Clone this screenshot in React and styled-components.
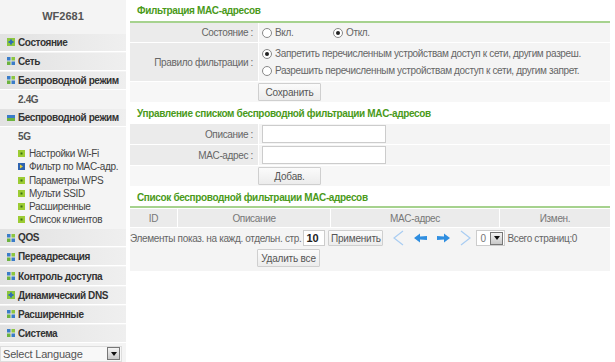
import React from 'react'
import styled, { createGlobalStyle } from 'styled-components'

const Global = createGlobalStyle`
  body {
    margin: 0;
    background: #fff;
    font-family: "Liberation Sans", Arial, sans-serif;
    font-size: 10px;
    letter-spacing: -0.35px;
    color: #666;
  }
`

const Page = styled.div`
  display: flex;
  width: 615px;
  height: 362px;
  overflow: hidden;
`

const Sidebar = styled.div`
  width: 126px;
  flex: none;
  background: #f4f4f4;
  display: flex;
  flex-direction: column;
`

const Brand = styled.div`
  height: 35px;
  padding-top: 10px;
  box-sizing: border-box;
  text-align: center;
  font-weight: bold;
  font-size: 11px;
  letter-spacing: 0;
  color: #555;
`

const MenuItem = styled.div`
  height: 18px;
  margin-bottom: 1px;
  display: flex;
  align-items: center;
  gap: 3px;
  padding-left: 7px;
  color: #333;
  font-weight: bold;
  letter-spacing: -0.4px;
  white-space: nowrap;
  background: linear-gradient(to right, #e2e2e2, #efefef);
  border-bottom: 1px solid #fff;
`

const Band = styled.div`
  height: 18px;
  padding-left: 18px;
  display: flex;
  align-items: center;
  font-weight: bold;
  color: #555;
  margin-bottom: 1px;
`

const SubList = styled.div`
  display: flex;
  flex-direction: column;
  padding: 1px 0 3px 18px;
`

const SubItem = styled.div`
  height: 13.2px;
  display: flex;
  align-items: center;
  gap: 4px;
  color: #444;
  white-space: nowrap;
`

const LangSelect = styled.div`
  margin-top: 2px;
  height: 17px;
  width: 122px;
  box-sizing: border-box;
  background: #f8f8f8;
  border: 1px solid #ddd;
  display: flex;
  align-items: center;
  justify-content: space-between;
  padding-left: 2px;
  color: #555;
  font-size: 11px;
  letter-spacing: -0.2px;
`

const DropBtn = styled.span`
  width: 13px;
  height: 13px;
  margin-right: 1px;
  background: linear-gradient(#f4f4f4, #c8c8c8);
  border: 1px solid #777;
  box-sizing: border-box;
  display: flex;
  align-items: center;
  justify-content: center;
  &::after {
    content: '';
    border-left: 3px solid transparent;
    border-right: 3px solid transparent;
    border-top: 4px solid #111;
  }
`

const Main = styled.div`
  margin-left: 4px;
  width: 480px;
  display: flex;
  flex-direction: column;
`

const Title = styled.div`
  padding: 5px 0 0 7px;
  box-sizing: border-box;
  color: #4a9a1a;
  font-weight: bold;
  border-bottom: 2px solid ${p => (p.line ? '#a6d28e' : 'transparent')};
  height: ${p => p.h || 19}px;
`

const Row = styled.div`
  display: grid;
  grid-template-columns: 129px 1fr;
  border-bottom: 1px solid #fff;
  background: #f4f4f4;
  min-height: ${p => p.h || 19}px;
`

const Label = styled.div`
  background: #ebebeb;
  display: flex;
  align-items: center;
  justify-content: flex-end;
  padding-right: 5px;
  border-right: 1px solid #fff;
`

const Value = styled.div`
  display: flex;
  flex-direction: ${p => (p.column ? 'column' : 'row')};
  justify-content: ${p => (p.column ? 'center' : 'flex-start')};
  align-items: ${p => (p.column ? 'flex-start' : 'center')};
  padding-left: 3px;
  gap: ${p => (p.column ? '6px' : '0')};
  white-space: nowrap;
`

const ButtonRow = styled.div`
  background: #f7f7f7;
  padding: 1px 0 1px 128px;
  border-bottom: 1px solid #fff;
`

const Button = styled.button`
  font-family: inherit;
  font-size: 10px;
  letter-spacing: -0.2px;
  color: #555;
  height: 18px;
  width: ${p => p.w || 63}px;
  padding: 0;
  border: 1px solid #cfcfcf;
  background: linear-gradient(#fbfbfb, #ececec);
  border-radius: 1px;
  white-space: nowrap;
  display: block;
`

const Radio = styled.label`
  display: flex;
  align-items: center;
  gap: 3px;
  width: ${p => (p.w ? p.w + 'px' : 'auto')};
  color: #666;
`

const Dot = styled.span`
  width: 8px;
  height: 8px;
  border-radius: 50%;
  border: 1px solid #888;
  background: #fff;
  display: flex;
  align-items: center;
  justify-content: center;
  &::after {
    content: '';
    width: 4px;
    height: 4px;
    border-radius: 50%;
    background: ${p => (p.on ? '#222' : 'transparent')};
  }
`

const Input = styled.input`
  font-family: inherit;
  font-size: 11px;
  width: ${p => p.w || 124}px;
  height: ${p => p.h || 18}px;
  margin-left: ${p => p.ml || 0}px;
  box-sizing: border-box;
  border: 1px solid #ccc;
  background: #fff;
  padding: 0 2px;
  font-weight: ${p => (p.bold ? 'bold' : 'normal')};
  color: #222;
`

const HeadRow = styled.div`
  display: grid;
  grid-template-columns: 47px 152px 168px 1fr;
  gap: 1px;
  background: #fff;
  border-top: 1px solid #fff;
`

const HeadCell = styled.div`
  height: 18px;
  background: #ebebeb;
  display: flex;
  align-items: center;
  justify-content: center;
  color: #777;
`

const Pager = styled.div`
  background: #f4f4f4;
  height: 20px;
  display: flex;
  align-items: center;
  color: #666;
  white-space: nowrap;
  border-top: 1px solid #fff;
`

const PagerButton = styled(Button)`
  height: 16px;
  margin-left: 3px;
`

const Arrow = styled.svg`
  width: 16px;
  height: 16px;
  flex: none;
  margin-left: ${p => p.ml || 6}px;
`

const PageSelect = styled.div`
  margin-left: 3px;
  width: 29px;
  height: 16px;
  box-sizing: border-box;
  border: 1px solid #ccc;
  background: #fff;
  display: flex;
  align-items: center;
  justify-content: space-between;
  padding-left: 3px;
  color: #777;
  margin-right: 2px;
`

const DeleteRow = styled.div`
  background: #f4f4f4;
  padding: 1px 0 4px 127px;
`

const GridIcon = ({ kind }) => {
  if (kind === 'dot')
    return (
      <svg width="8" height="8" viewBox="0 0 8 8">
        <rect width="8" height="8" fill="#8cc63f" />
        <rect x="3" y="1.5" width="2" height="5" fill="#2f6fb5" />
        <rect x="1.5" y="3" width="5" height="2" fill="#2f6fb5" />
      </svg>
    )
  if (kind === 'open')
    return (
      <svg width="8" height="8" viewBox="0 0 8 8">
        <rect y="1" width="8" height="3" fill="#3a7cc8" />
        <rect y="4" width="8" height="3" fill="#6cb33f" />
      </svg>
    )
  return (
    <svg width="8" height="8" viewBox="0 0 8 8">
      <rect width="3.5" height="3.5" fill="#3a7cc8" />
      <rect x="4.5" width="3.5" height="3.5" fill="#8cc63f" />
      <rect y="4.5" width="3.5" height="3.5" fill="#6cb33f" />
      <rect x="4.5" y="4.5" width="3.5" height="3.5" fill="#3a7cc8" />
    </svg>
  )
}

const Bullet = ({ active }) =>
  active ? (
    <svg width="7" height="7" viewBox="0 0 7 7">
      <rect width="7" height="7" fill="#2f64b0" />
      <path d="M2 1.5 L5 3.5 L2 5.5 Z" fill="#e8d23a" />
    </svg>
  ) : (
    <svg width="7" height="7" viewBox="0 0 7 7">
      <rect width="7" height="7" fill="#9ccc33" />
      <rect x="2.5" y="2.5" width="2" height="2" fill="#3a6e14" />
    </svg>
  )

const menuTop = [
  ['Состояние', 'dot'],
  ['Сеть', 'grid'],
  ['Беспроводной режим', 'grid'],
]

const menuBottom = [
  ['QOS', 'grid'],
  ['Переадресация', 'grid'],
  ['Контроль доступа', 'grid'],
  ['Динамический DNS', 'dot'],
  ['Расширенные', 'grid'],
  ['Система', 'grid'],
]

const subItems = [
  'Настройки Wi-Fi',
  'Фильтр по MAC-адр.',
  'Параметры WPS',
  'Мульти SSID',
  'Расширенные',
  'Список клиентов',
]

export default function App() {
  return (
    <Page>
      <Global />
      <Sidebar>
        <Brand>WF2681</Brand>
        {menuTop.map(([t, k]) => (
          <MenuItem key={t}>
            <GridIcon kind={k} />
            {t}
          </MenuItem>
        ))}
        <Band>2.4G</Band>
        <MenuItem>
          <GridIcon kind="open" />
          Беспроводной режим
        </MenuItem>
        <Band>5G</Band>
        <SubList>
          {subItems.map((t, i) => (
            <SubItem key={t}>
              <Bullet active={i === 1} />
              {t}
            </SubItem>
          ))}
        </SubList>
        {menuBottom.map(([t, k]) => (
          <MenuItem key={t}>
            <GridIcon kind={k} />
            {t}
          </MenuItem>
        ))}
        <LangSelect>
          Select Language
          <DropBtn />
        </LangSelect>
      </Sidebar>

      <Main>
        <Title line h={23}>Фильтрация MAC-адресов</Title>
        <Row>
          <Label>Состояние :</Label>
          <Value>
            <Radio w={71}><Dot />Вкл.</Radio>
            <Radio><Dot on />Откл.</Radio>
          </Value>
        </Row>
        <Row h={38}>
          <Label>Правило фильтрации :</Label>
          <Value column>
            <Radio><Dot on />Запретить перечисленным устройствам доступ к сети, другим разреш.</Radio>
            <Radio><Dot />Разрешить перечисленным устройствам доступ к сети, другим запрет.</Radio>
          </Value>
        </Row>
        <ButtonRow>
          <Button>Сохранить</Button>
        </ButtonRow>

        <Title h={21}>Управление списком беспроводной фильтрации MAC-адресов</Title>
        <Row h={20}>
          <Label>Описание :</Label>
          <Value><Input /></Value>
        </Row>
        <Row h={20}>
          <Label>MAC-адрес :</Label>
          <Value><Input /></Value>
        </Row>
        <ButtonRow>
          <Button>Добав.</Button>
        </ButtonRow>

        <Title line h={21}>Список беспроводной фильтрации MAC-адресов</Title>
        <HeadRow>
          <HeadCell>ID</HeadCell>
          <HeadCell>Описание</HeadCell>
          <HeadCell>MAC-адрес</HeadCell>
          <HeadCell>Измен.</HeadCell>
        </HeadRow>
        <Pager>
          Элементы показ. на кажд. отдельн. стр.
          <Input bold w={22} h={16} ml={2} defaultValue="10" />
          <PagerButton w={55}>Применить</PagerButton>
          <Arrow ml={8} viewBox="0 0 16 16">
            <path d="M12 1 L3 8 L12 15" fill="none" stroke="#a9cdf2" strokeWidth="1.2" />
          </Arrow>
          <Arrow viewBox="0 0 16 16">
            <path d="M1 8 L7 3.5 L7 6.5 L14 6 L14 10 L7 9.5 L7 12.5 Z" fill="#2f8ee0" />
          </Arrow>
          <Arrow viewBox="0 0 16 16">
            <path d="M15 8 L9 3.5 L9 6.5 L2 6 L2 10 L9 9.5 L9 12.5 Z" fill="#2f8ee0" />
          </Arrow>
          <Arrow viewBox="0 0 16 16">
            <path d="M4 1 L13 8 L4 15" fill="none" stroke="#a9cdf2" strokeWidth="1.2" />
          </Arrow>
          <PageSelect>
            0
            <DropBtn />
          </PageSelect>
          Всего страниц:0
        </Pager>
        <DeleteRow>
          <Button>Удалить все</Button>
        </DeleteRow>
      </Main>
    </Page>
  )
}
